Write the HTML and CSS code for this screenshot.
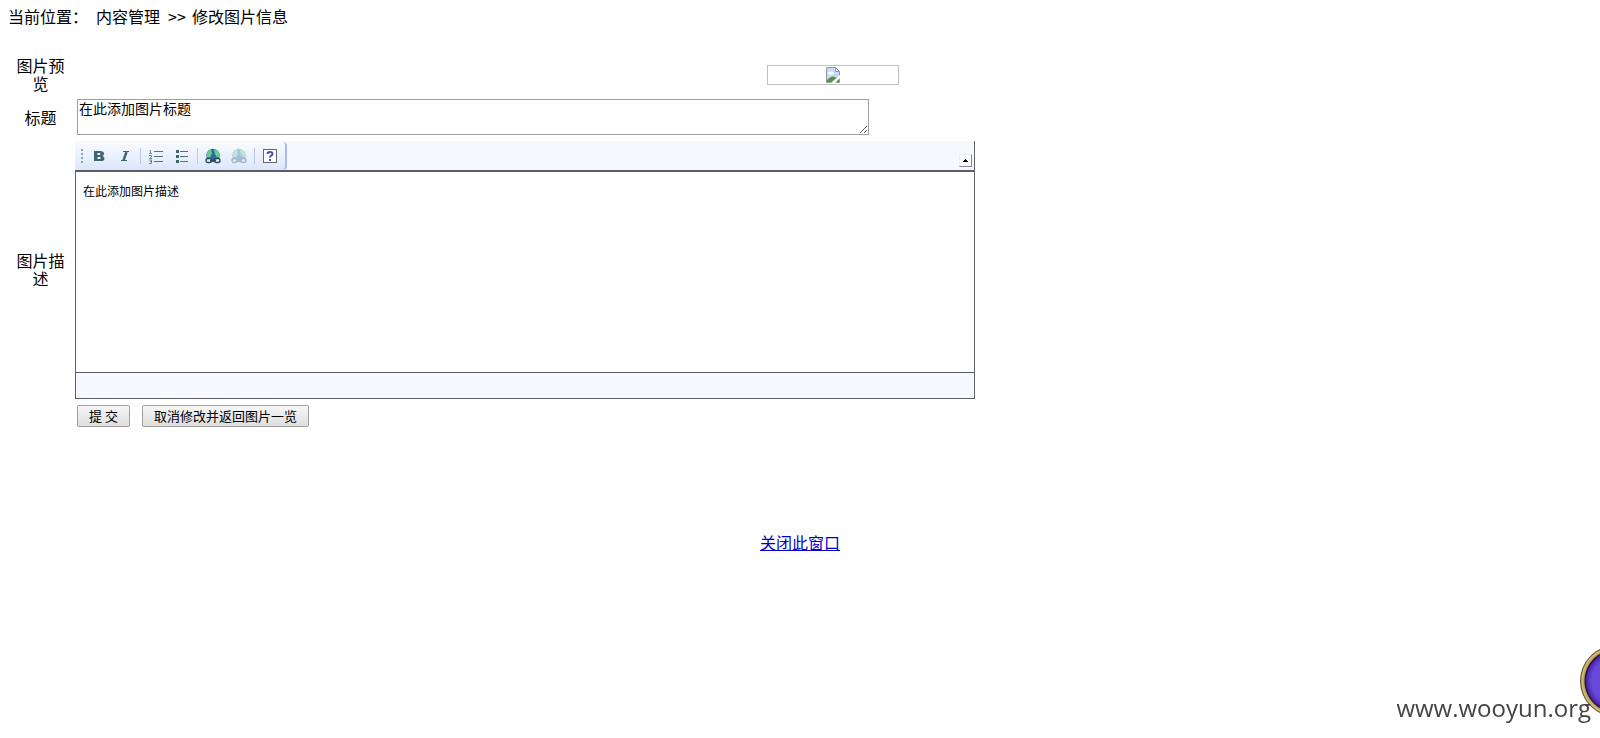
FILE: index.html
```html
<!DOCTYPE html>
<html lang="zh-CN">
  <head>
    <meta charset="UTF-8" />
    <meta name="viewport" content="width=device-width, initial-scale=1.0" />
    <title>修改图片信息</title>
    <link rel="stylesheet" href="styles.css">
  </head>
  <body>
    <div class="location">
      <span>当前位置：</span>
      <span>内容管理</span>
      <span class="arrows">&gt;&gt;</span>
      <span>修改图片信息</span>
    </div>

    <form class="edit-form">
      <table class="form-table">
        <tr class="preview-row">
          <th>图片预览</th>
          <td>
            <div class="preview" role="img" aria-label="图片预览">
              <svg width="14" height="16" viewBox="0 0 14 16">
                <path d="M.5.5h9l4 4v11H.5z" fill="#c9daf8" stroke="#8e98a8" />
                <path d="M9.500.5v4h4z" fill="#fff" stroke="#8e98a8" />
                <ellipse cx="5" cy="6" rx="3" ry="1.500" fill="#fff" />
                <path d="M1 15v-2q4-5 8-3l2 1-5 4z" fill="#4f9a3c" />
                <path d="M9 15l4-4v4z" fill="#4f9a3c" />
                <path d="M5 16l9-8v3l-5 5z" fill="#fff" />
              </svg>
            </div>
          </td>
        </tr>
        <tr>
          <th><label for="title">标题</label></th>
          <td><textarea class="title-input" id="title">在此添加图片标题</textarea></td>
        </tr>
        <tr>
          <th><label for="description">图片描述</label></th>
          <td>
            <div class="editor">
              <div class="editor-top">
                <div class="toolbar">
                  <span class="grip"></span>
                  <button type="button" class="tool" title="加粗">
                    <svg width="16" height="16" viewBox="0 0 16 16">
                      <path fill-rule="evenodd" d="M3 3h6q4 0 4 2.700 0 1.700-1.600 2.200 2.100.5 2.100 2.500 0 2.600-3.800 2.600H3zM6.500 5v2h1.700q1.300 0 1.300-1t-1.300-1zM6.500 9v2h2q1.400 0 1.400-1t-1.400-1z" fill="#3f6670" />
                    </svg>
                  </button>
                  <button type="button" class="tool" title="倾斜">
                    <svg width="16" height="16" viewBox="0 0 16 16">
                      <path d="M6 3.500h6M4 12.500h6" stroke="#3f6670" />
                      <path d="M9.500 4l-3 8.500" stroke="#3f6670" stroke-width="2.400" />
                    </svg>
                  </button>
                  <span class="separator"></span>
                  <button type="button" class="tool" title="编号列表">
                    <svg width="16" height="16" viewBox="0 0 16 16" fill="none" stroke="#55737c">
                      <path d="M6 3.500h9M6 8.500h9M6 13.500h9" />
                      <path d="M1.500 2.500h1v3M1 5.500h3M1 7.500h2.500v1.500L1.500 10.500H4M1 12h2.500v3.500H1M2 13.500h1.500" stroke-width=".8" />
                    </svg>
                  </button>
                  <button type="button" class="tool" title="项目列表">
                    <svg width="16" height="16" viewBox="0 0 16 16">
                      <path d="M2 2h3v3H2zM2 7h3v3H2zM2 12h3v3H2z" fill="#3f6670" />
                      <path d="M6 3.500h8M6 8.500h8M6 13.500h8" stroke="#55737c" />
                    </svg>
                  </button>
                  <span class="separator"></span>
                  <button type="button" class="tool" title="插入超链接">
                    <svg width="16" height="16" viewBox="0 0 16 16">
                      <circle cx="8" cy="7.500" r="6.700" fill="#3069a8" />
                      <path d="M2 9Q1 3 6 1.500l1 4-2 4zM9 1q6 1 5.500 8h-3l-2-4z" fill="#62d28b" />
                      <rect x="1" y="10.500" width="5.500" height="4" rx="2" fill="#e4eef3" stroke="#25505e" stroke-width="1.400" />
                      <rect x="9.500" y="10.500" width="5.500" height="4" rx="2" fill="#e4eef3" stroke="#25505e" stroke-width="1.400" />
                      <path d="M5 12.500h6" stroke="#25505e" stroke-width="1.400" />
                    </svg>
                  </button>
                  <button type="button" class="tool" title="取消超链接" disabled>
                    <svg width="16" height="16" viewBox="0 0 16 16">
                      <circle cx="8" cy="7.500" r="6.700" fill="#3069a8" />
                      <path d="M2 9Q1 3 6 1.500l1 4-2 4zM9 1q6 1 5.500 8h-3l-2-4z" fill="#62d28b" />
                      <rect x="1" y="10.500" width="5" height="4" rx="2" fill="#e4eef3" stroke="#25505e" stroke-width="1.400" />
                      <rect x="10" y="10.500" width="5" height="4" rx="2" fill="#e4eef3" stroke="#25505e" stroke-width="1.400" />
                    </svg>
                  </button>
                  <span class="separator"></span>
                  <button type="button" class="tool" title="关于">
                    <svg width="16" height="16" viewBox="0 0 16 16">
                      <rect x="1.500" y="1.500" width="13" height="13" fill="#fff" stroke="#65656f" />
                      <path d="M5.500 6q0-2 2.500-2t2.500 2q0 1.200-1.500 1.800-1 .5-1 1.700" fill="none" stroke="#4c4cb4" stroke-width="2" />
                      <path d="M7 11h2v2H7z" fill="#4c4cb4" />
                    </svg>
                  </button>
                </div>
                <button type="button" class="collapse" title="收起工具栏">
                  <svg width="5" height="3" viewBox="0 0 5 3"><path d="M2 0h1v1h1v1h1v1H0V2h1V1h1z" /></svg>
                </button>
              </div>
              <textarea class="editor-body" id="description">在此添加图片描述</textarea>
              <div class="editor-bottom"></div>
            </div>
          </td>
        </tr>
        <tr>
          <td></td>
          <td>
            <div class="actions">
              <button type="submit" class="button">提 交</button>
              <button type="button" class="button">取消修改并返回图片一览</button>
            </div>
          </td>
        </tr>
      </table>
    </form>

    <div class="close"><a href="#">关闭此窗口</a></div>

    <div class="orb"></div>
    <div class="watermark">www.wooyun.org</div>
  </body>
</html>
```
FILE: styles.css
```css
body {
  margin: 8px;
  font-family: "Noto Sans CJK SC", sans-serif;
  font-size: 16px;
  line-height: 18px;
  color: #000;
  background: #fff;
}

.location {
  display: flex;
  gap: 8px;
  line-height: 16px;
}

.arrows {
  width: 16px;
}

.edit-form {
  margin-top: 30px;
}

.form-table {
  width: 100%;
  table-layout: fixed;
  border-spacing: 2px;
}

.form-table th {
  width: 4%;
  box-sizing: border-box;
  padding: 0 7px 2px 5px;
  font-weight: normal;
  text-align: center;
}

.form-table td {
  padding: 0;
}

.preview-row {
  height: 38px;
}

.preview {
  display: flex;
  align-items: center;
  justify-content: center;
  width: 130px;
  height: 18px;
  margin: 0 auto;
  border: 1px solid #c0c0c0;
}

textarea,
button {
  font-family: inherit;
}

.title-input {
  display: block;
  box-sizing: border-box;
  width: 792px;
  max-width: 100%;
  height: 36px;
  margin: 3px 2px 4px;
  padding: 0 1px;
  border: 1px solid #a0a0a0;
  font-size: 14px;
  line-height: 16px;
}

/* editor */
.editor {
  box-sizing: border-box;
  width: 900px;
  max-width: 100%;
  border-right: 1px solid #646468;
}

.editor-top {
  display: flex;
  align-items: flex-end;
  justify-content: space-between;
  height: 29px;
  background: #f7f8fd;
  border-bottom: 2px solid #5c5c64;
}

.toolbar {
  display: flex;
  align-items: center;
  box-sizing: border-box;
  height: 28px;
  padding: 0 2px 0 6px;
  background: linear-gradient(#f8faff, #dce6fb);
  border-right: 2px solid #a5bbec;
  border-radius: 0 4px 4px 0;
}

.grip {
  width: 2px;
  height: 14px;
  margin-right: 3px;
  background: repeating-linear-gradient(#8d9cc0 0 2px, transparent 2px 4px);
}

.tool {
  display: flex;
  align-items: center;
  justify-content: center;
  width: 26px;
  height: 24px;
  padding: 0;
  border: 0;
  background: none;
}

.tool:disabled {
  opacity: 0.35;
}

.separator {
  width: 1px;
  height: 16px;
  margin: 0 2px;
  background: #b9c8ea;
}

.collapse {
  display: flex;
  align-items: center;
  justify-content: center;
  box-sizing: border-box;
  width: 13px;
  height: 13px;
  margin: 0 2px 3px;
  padding: 0;
  background: #fbfbff;
  border: 1px solid #eee;
  border-right-color: #85858c;
  border-bottom-color: #85858c;
}

.editor-body {
  display: block;
  box-sizing: border-box;
  width: 100%;
  height: 200px;
  padding: 11px 7px;
  border: 0;
  border-left: 1px solid #646468;
  outline: 0;
  resize: none;
  font-size: 12px;
  line-height: 16px;
}

.editor-bottom {
  height: 25px;
  background: #f7f8fd;
  border: 1px solid #5c5c64;
  border-right: 0;
}

/* buttons */
.actions {
  display: flex;
  gap: 12px;
  padding: 4px 2px;
}

.button {
  height: 22px;
  padding: 0 11px;
  border: 1px solid #a0a0a0;
  border-radius: 2px;
  background: linear-gradient(#f6f6f6, #dedede);
  color: #000;
  font-size: 13px;
  line-height: 20px;
}

.close {
  margin-top: 100px;
  text-align: center;
}

.close a {
  color: #0000c8;
}

/* corner decorations */
.orb {
  position: fixed;
  right: -52px;
  bottom: 21px;
  box-sizing: border-box;
  width: 72px;
  height: 72px;
  border: 1px solid #5d4c2c;
  border-radius: 50%;
  background: radial-gradient(circle, #6848d8 0 24px, #4d2bb0 29px, #20113e 31px, #b49b58 32px, #d6c078 34px, #8b7540 36px);
}

.watermark {
  position: fixed;
  right: 9px;
  bottom: 14px;
  color: #444;
  font-family: "Open Sans", sans-serif;
  font-size: 24px;
  line-height: 32px;
}
```
